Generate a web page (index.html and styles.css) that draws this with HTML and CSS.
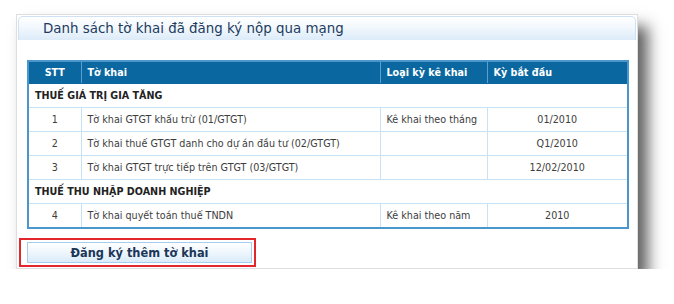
FILE: index.html
```html
<!DOCTYPE html>
<html lang="vi">
<head>
<meta charset="utf-8">
<title>Danh sách tờ khai</title>
<link rel="stylesheet" href="styles.css">
</head>
<body>
<div class="page">
  <div class="panel">
    <div class="panel-head">
      <h1 class="title">Danh sách tờ khai đã đăng ký nộp qua mạng</h1>
    </div>
    <div class="panel-body">
      <table class="grid">
        <colgroup>
          <col class="c-stt"><col class="c-name"><col class="c-type"><col class="c-start">
        </colgroup>
        <thead>
          <tr><th class="center">STT</th><th>Tờ khai</th><th>Loại kỳ kê khai</th><th>Kỳ bắt đầu</th></tr>
        </thead>
        <tbody>
          <tr class="group"><td colspan="4">THUẾ GIÁ TRỊ GIA TĂNG</td></tr>
          <tr><td class="center">1</td><td>Tờ khai GTGT khấu trừ (01/GTGT)</td><td>Kê khai theo tháng</td><td class="center">01/2010</td></tr>
          <tr><td class="center">2</td><td>Tờ khai thuế GTGT danh cho dự án đầu tư (02/GTGT)</td><td></td><td class="center">Q1/2010</td></tr>
          <tr><td class="center">3</td><td>Tờ khai GTGT trực tiếp trên GTGT (03/GTGT)</td><td></td><td class="center">12/02/2010</td></tr>
          <tr class="group"><td colspan="4">THUẾ THU NHẬP DOANH NGHIỆP</td></tr>
          <tr><td class="center">4</td><td>Tờ khai quyết toán thuế TNDN</td><td>Kê khai theo năm</td><td class="center">2010</td></tr>
        </tbody>
      </table>
      <div class="highlight">
        <button class="btn" type="button">Đăng ký thêm tờ khai</button>
      </div>
    </div>
  </div>
</div>
</body>
</html>
```
FILE: styles.css
```css
html, body {
  margin: 0;
  padding: 0;
  background: #ffffff;
}
.page {
  padding: 14px 0 0 16px;
  font-family: "DejaVu Sans", "Liberation Sans", sans-serif;
}
.panel {
  width: 620px;
  height: 253px;
  border: 1px solid #dedede;
  background: #ffffff;
  box-shadow: 10px 12px 14px rgba(30, 30, 30, 0.7);
  box-sizing: content-box;
}
.panel-head {
  margin: 1px 1px 0 1px;
  height: 23px;
  border: 1px solid #cfe1f2;
  border-bottom: none;
  border-radius: 5px 5px 0 0;
  background: linear-gradient(#ffffff, #f2f8fd 45%, #dcebf9);
  display: flex;
  align-items: center;
}
.title {
  margin: 0 0 0 24px;
  font-family: "DejaVu Sans", sans-serif;
  font-weight: normal;
  font-size: 13.4px;
  color: #1c3b5e;
}
.panel-body {
  padding: 20px 0 0 10px;
}
.grid {
  width: 600px;
  border-collapse: collapse;
  table-layout: fixed;
  border: 2px solid #4b97cc;
  font-size: 9.6px;
  color: #3d3d3d;
}
.c-stt { width: 53px; }
.c-name { width: 299px; }
.c-type { width: 107px; }
.c-start { width: 141px; }
.grid th {
  height: 21px;
  background: #0a67a0;
  color: #ffffff;
  font-weight: bold;
  text-align: left;
  padding: 0 6px;
  border-left: 1px solid #5a9fd0;
  border-bottom: 1px solid #0a67a0;
}
.grid th:first-child { border-left: none; }
.grid th.center { text-align: center; }
.grid td {
  height: 23px;
  padding: 0 6px;
  border: 1px solid #c9e1f5;
  white-space: nowrap;
  overflow: hidden;
}
.grid td.center { text-align: center; }
.grid tr.group td {
  font-weight: bold;
  color: #222222;
  height: 23px;
}
.highlight {
  margin-top: 9px;
  margin-left: -8px;
  width: 225px;
  height: 21px;
  padding: 2px 2px 2px 6px;
  border: 2px solid #e3262b;
  box-sizing: content-box;
}
.btn {
  display: block;
  width: 100%;
  height: 21px;
  margin: 0;
  padding: 0;
  border: 1px solid #a6cdee;
  background: linear-gradient(#ffffff, #eef6fd 50%, #dbecfa);
  font-family: "DejaVu Sans", sans-serif;
  font-weight: bold;
  font-size: 11.4px;
  color: #1b3658;
  cursor: pointer;
}
```
